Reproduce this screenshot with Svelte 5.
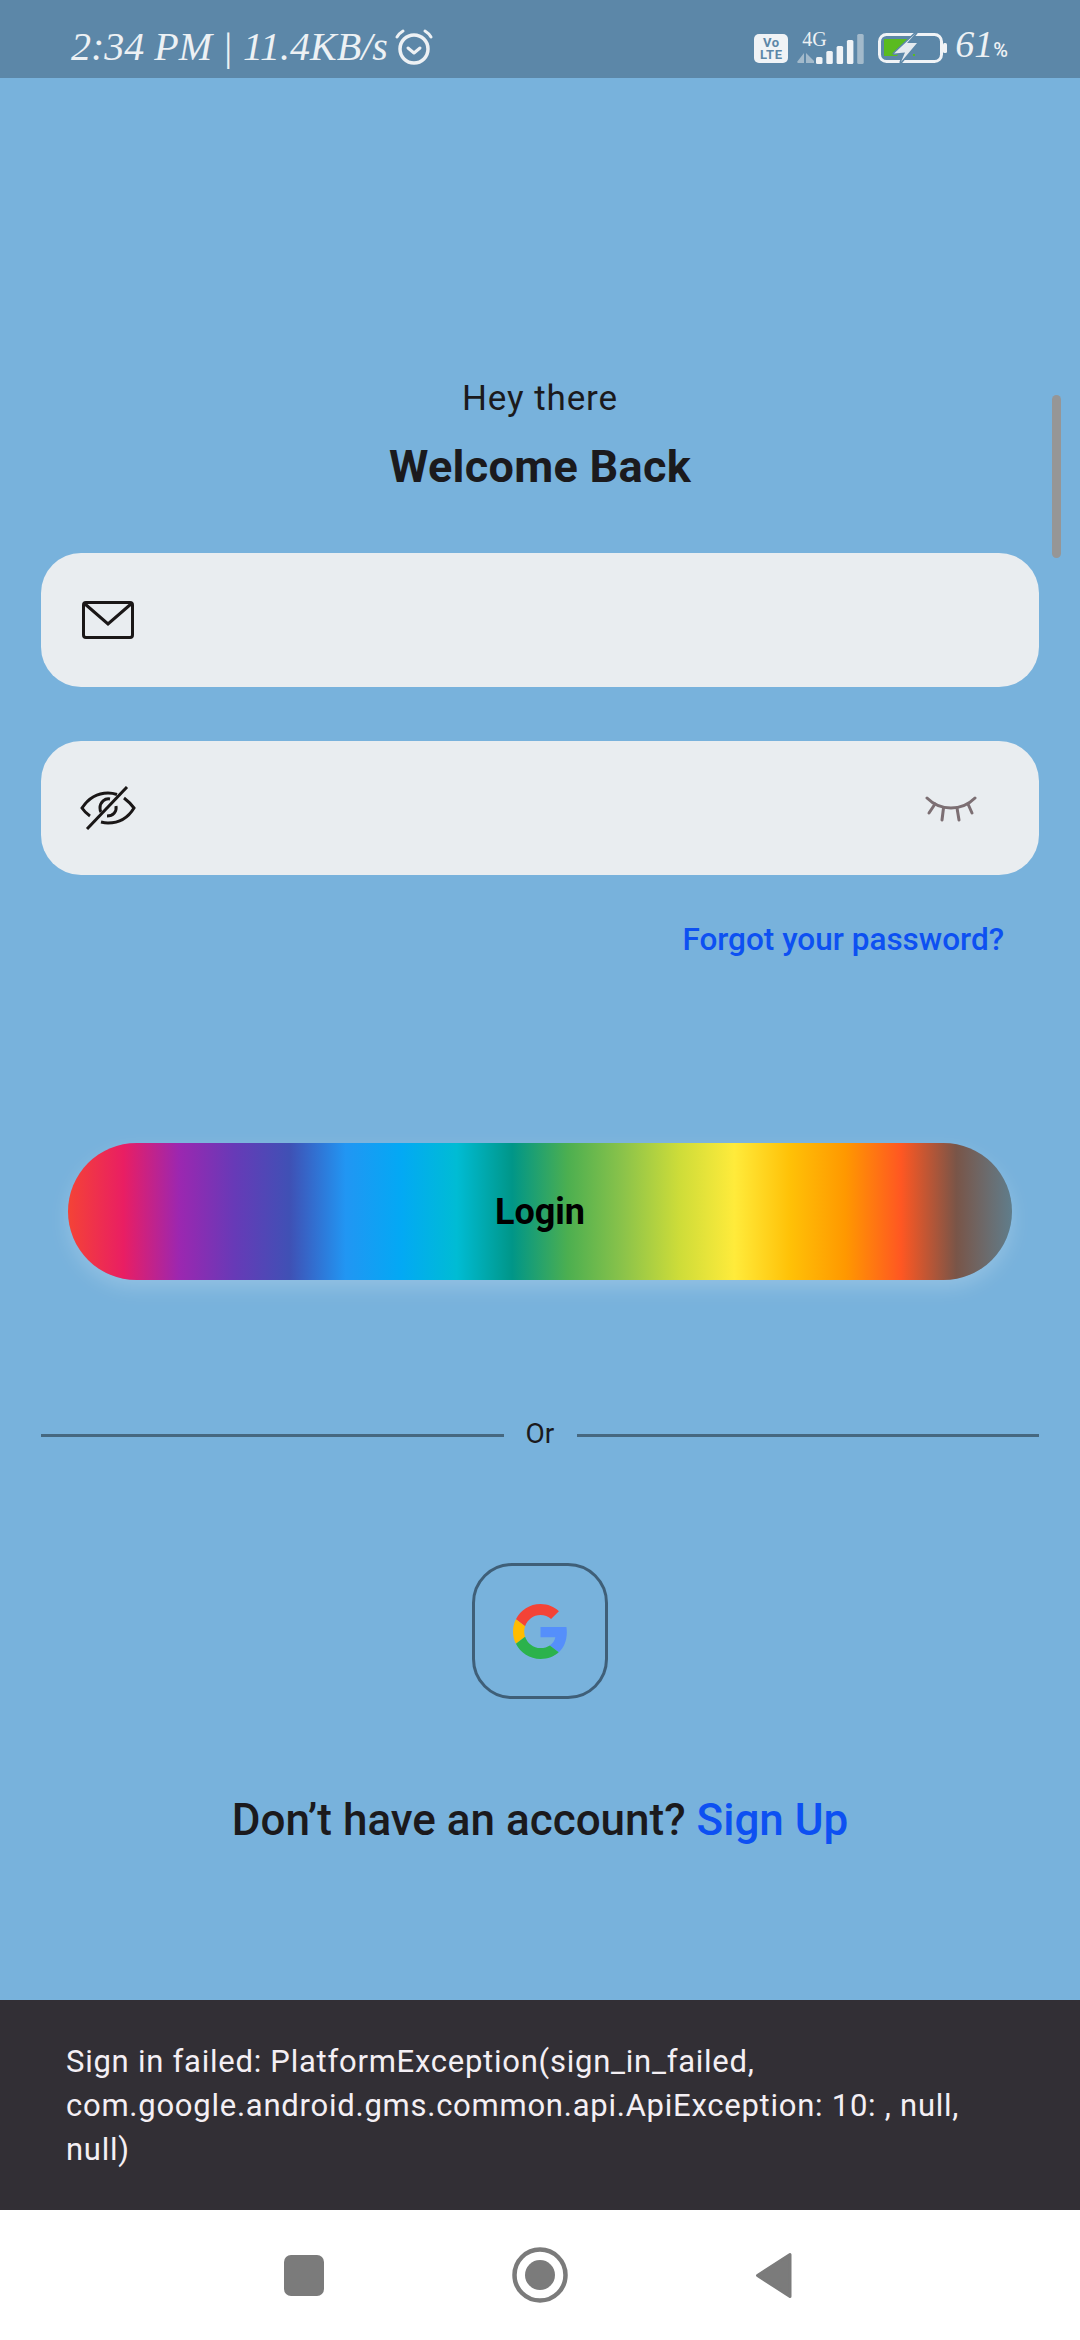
<script>
  const rainbow = [
    "#f44336", "#e91e63", "#9c27b0", "#673ab7", "#3f51b5", "#2196f3",
    "#03a9f4", "#00bcd4", "#009688", "#4caf50", "#8bc34a", "#cddc39",
    "#ffeb3b", "#ffc107", "#ff9800", "#ff5722", "#795548", "#607d8b",
  ];
  const gradient = `linear-gradient(to right, ${rainbow.join(", ")})`;
  const bars = [7, 13, 18, 24, 30];
</script>

<div class="screen">
  <header class="status">
    <div class="status-left">
      <span class="clock">2:34 PM | 11.4KB/s</span>
      <svg class="alarm" width="40" height="38" viewBox="0 0 40 38" fill="none" stroke="#edf1f4">
        <circle cx="20" cy="21" r="14" stroke-width="3.500" />
        <path d="M14 20l6 5 6-5" stroke-width="3" stroke-linecap="round" stroke-linejoin="round" />
        <path d="M3 9c1.500-2.500 3.500-4.500 6-6M37 9c-1.500-2.500-3.500-4.500-6-6" stroke-width="3" stroke-linecap="round" />
      </svg>
    </div>
    <div class="status-right">
      <div class="volte"><span>Vo</span><span>LTE</span></div>
      <div class="network">
        <span class="four-g">4G</span>
        <svg width="67" height="31" viewBox="0 0 67 31">
          <path d="M0 29l7-9v10h-6zM9 20l8 8v2h-8z" fill="#a3bacb" />
          {#each bars as h, i}
            <rect
              x={19 + i * 10.300}
              y={31 - h}
              width="6.500"
              height={h}
              rx="1.500"
              fill={i === 4 ? "#a3bacb" : "#f0f3f6"}
            />
          {/each}
        </svg>
      </div>
      <svg class="battery" width="69" height="31" viewBox="0 0 69 31">
        <rect x="1.500" y="1.500" width="62" height="27" rx="7" fill="none" stroke="#f0f3f6" stroke-width="3" />
        <path d="M6 6h27l-14 17h-13z" fill="#5abb1f" />
        <rect x="35" y="21" width="2" height="2" fill="#5abb1f" />
        <path d="M38 0l-22 20.500 11-1-4 9.500 16-19-10 0z" fill="#e4eaef" stroke="#5c87a8" stroke-width="3" stroke-linejoin="round" paint-order="stroke" />
        <rect x="65" y="10" width="4" height="10" rx="1.500" fill="#f0f3f6" />
      </svg>
      <span class="level">61<small>%</small></span>
    </div>
  </header>

  <main class="content">
    <p class="hey">Hey there</p>
    <h1 class="welcome">Welcome Back</h1>

    <div class="field">
      <svg width="52" height="38" viewBox="0 0 52 38" fill="none" stroke="#1a1717" stroke-width="3">
        <rect x="1.500" y="1.500" width="49" height="35" rx="2.500" />
        <path d="M3 3l23 20 23-20" />
      </svg>
    </div>

    <div class="field second">
      <svg width="56" height="44" viewBox="0 0 56 44" fill="none" stroke="#1a1717" stroke-width="3">
        <path d="M10 30c-3-2-6-5-8-8 6-9 15-15 26-15 3 0 6 .5 9 1.500" />
        <path d="M44 12c4 3 7 6 10 10-6 10-15 15-26 15-3 0-5-.5-7-1" />
        <path d="M30 13c-5-1-10 3-10 9 0 1 .2 3 1 4" />
        <path d="M36 20c1 6-3 10-9 10" />
        <path d="M47 1l-40 42" />
      </svg>
      <svg class="lashes" width="52" height="27" viewBox="0 0 52 27" fill="none" stroke="#7c6f73" stroke-width="3" stroke-linecap="round">
        <path d="M2 2c6 6 14 10 24 10s18-4 24-10" />
        <path d="M10 8l-6 9M18.500 12l-1.500 12M32 12l2 12M43 8l4 9" />
      </svg>
    </div>

    <a class="forgot" href="#forgot">Forgot your password?</a>

    <button class="login" style="background: {gradient}">Login</button>

    <div class="or">
      <span class="rule"></span>
      <span class="or-text">Or</span>
      <span class="rule"></span>
    </div>

    <button class="google" aria-label="Sign in with Google">
      <svg width="55" height="55" viewBox="0 0 48 48">
        <path fill="#f44336" d="M24 9.500c3.540 0 6.710 1.220 9.210 3.600l6.850-6.850C35.900 2.380 30.470 0 24 0 14.620 0 6.510 5.380 2.560 13.220l7.980 6.190C12.430 13.720 17.740 9.500 24 9.500z" />
        <path fill="#558ffb" d="M46.980 24.550c0-1.570-.15-3.090-.38-4.550H24v9.020h12.940c-.58 2.960-2.260 5.480-4.780 7.180l7.730 6c4.510-4.180 7.090-10.360 7.090-17.650z" />
        <path fill="#ffbc00" d="M10.530 28.590c-.48-1.450-.76-2.990-.76-4.590s.27-3.140.76-4.590l-7.980-6.190C.92 16.460 0 20.120 0 24c0 3.880.92 7.540 2.560 10.780l7.970-6.190z" />
        <path fill="#2bb24c" d="M24 48c6.480 0 11.930-2.130 15.890-5.810l-7.730-6c-2.150 1.450-4.920 2.300-8.160 2.300-6.260 0-11.570-4.220-13.470-9.910l-7.980 6.190C6.510 42.620 14.620 48 24 48z" />
      </svg>
    </button>

    <p class="signup">Don’t have an account? <a href="#signup">Sign Up</a></p>

    <div class="scrollbar"></div>
  </main>

  <div class="snackbar">
    Sign in failed: PlatformException(sign_in_failed, com.google.android.gms.common.api.ApiException: 10: , null, null)
  </div>

  <nav class="navbar">
    <svg width="40" height="41" viewBox="0 0 40 41"><rect width="40" height="41" rx="7" fill="#7b7b7b" /></svg>
    <svg width="56" height="56" viewBox="0 0 56 56">
      <circle cx="28" cy="28" r="25.500" fill="none" stroke="#7b7b7b" stroke-width="4.500" />
      <circle cx="28" cy="28" r="15" fill="#7b7b7b" />
    </svg>
    <svg width="38" height="47" viewBox="0 0 38 47">
      <path d="M35 2.500v42L2.500 23.500z" fill="#7b7b7b" stroke="#7b7b7b" stroke-width="3" stroke-linejoin="round" />
    </svg>
  </nav>
</div>

<style>
  :global(body) {
    margin: 0;
    background: #78b2dc;
  }

  .screen {
    width: 1080px;
    height: 2340px;
    display: flex;
    flex-direction: column;
    background: #78b2dc;
    font-family: Roboto, sans-serif;
    color: #1b1a1d;
    overflow: hidden;
  }

  .status {
    height: 78px;
    flex-shrink: 0;
    box-sizing: border-box;
    padding: 16px 72px 0 71px;
    display: flex;
    justify-content: space-between;
    align-items: center;
    background: #5c87a8;
    color: #edf1f4;
  }

  .status-left,
  .status-right {
    display: flex;
    align-items: center;
  }

  .clock {
    font-family: "Liberation Serif", serif;
    font-style: italic;
    font-size: 40px;
    line-height: 44px;
  }

  .alarm {
    margin-left: 6px;
  }

  .volte {
    width: 34px;
    height: 29px;
    margin-top: 3px;
    display: flex;
    flex-direction: column;
    align-items: center;
    justify-content: center;
    background: #f0f3f6;
    border-radius: 5px;
    color: #5c87a8;
    font-size: 13px;
    font-weight: 700;
    line-height: 12px;
    letter-spacing: 0.5px;
  }

  .network {
    position: relative;
    width: 67px;
    height: 31px;
    margin: 3px 0 0 9px;
  }

  .four-g {
    position: absolute;
    left: 5px;
    top: -3px;
    font-family: "Liberation Serif", serif;
    font-size: 20px;
    line-height: 18px;
  }

  .battery {
    margin: 3px 0 0 14px;
  }

  .level {
    margin-left: 8px;
    font-family: "Liberation Serif", serif;
    font-style: italic;
    font-size: 38px;
    line-height: 44px;
  }

  .level small {
    font-family: Roboto, sans-serif;
    font-style: normal;
    font-weight: 500;
    font-size: 20px;
  }

  .content {
    position: relative;
    flex: 1;
    box-sizing: border-box;
    padding: 299px 41px 0;
    display: flex;
    flex-direction: column;
  }

  .hey {
    margin: 0;
    text-align: center;
    font-size: 35px;
    line-height: 44px;
    letter-spacing: 0.9px;
  }

  .welcome {
    margin: 18px 0 0;
    text-align: center;
    font-size: 45px;
    line-height: 56px;
    font-weight: 700;
    letter-spacing: 0.3px;
  }

  .field {
    height: 134px;
    margin-top: 58px;
    padding: 0 55px 0 41px;
    display: flex;
    align-items: center;
    justify-content: space-between;
    background: #e9edf0;
    border-radius: 40px;
  }

  .field.second {
    margin-top: 54px;
    padding-left: 39px;
  }

  .lashes {
    margin: 2px 7px 0 0;
  }

  .forgot {
    margin: 45px 35px 0 0;
    align-self: flex-end;
    color: #0d50f2;
    font-size: 31.500px;
    line-height: 40px;
    font-weight: 500;
    text-decoration: none;
  }

  .login {
    height: 137px;
    margin: 183px 27px 0;
    border: 0;
    padding: 0;
    border-radius: 69px;
    box-shadow: 0 8px 20px rgba(255, 255, 255, 0.2);
    color: #000;
    font-family: inherit;
    font-size: 36px;
    font-weight: 700;
  }

  .or {
    height: 40px;
    margin-top: 135px;
    display: flex;
    align-items: center;
  }

  .rule {
    flex: 1;
    height: 3px;
    background: #466880;
  }

  .or-text {
    width: 73px;
    padding-bottom: 2px;
    text-align: center;
    font-size: 28px;
    line-height: 38px;
  }

  .google {
    width: 136px;
    height: 136px;
    margin-top: 108px;
    align-self: center;
    padding: 0;
    display: flex;
    align-items: center;
    justify-content: center;
    background: none;
    border: 3px solid #3f5f78;
    border-radius: 40px;
  }

  .signup {
    margin: 93px 0 0;
    text-align: center;
    font-size: 44px;
    line-height: 56px;
    font-weight: 500;
  }

  .signup a {
    color: #0d50f2;
    text-decoration: none;
  }

  .scrollbar {
    position: absolute;
    top: 317px;
    left: 1052px;
    width: 9px;
    height: 163px;
    background: #969696;
    border-radius: 5px;
  }

  .snackbar {
    height: 210px;
    flex-shrink: 0;
    box-sizing: border-box;
    padding: 40px 66px 0 66px;
    background: #322f35;
    color: #f4eff4;
    font-size: 31px;
    line-height: 44px;
    letter-spacing: 0.75px;
  }

  .navbar {
    height: 130px;
    flex-shrink: 0;
    box-sizing: border-box;
    padding: 0 287px 0 284px;
    display: flex;
    align-items: center;
    justify-content: space-between;
    background: #fff;
  }
</style>
